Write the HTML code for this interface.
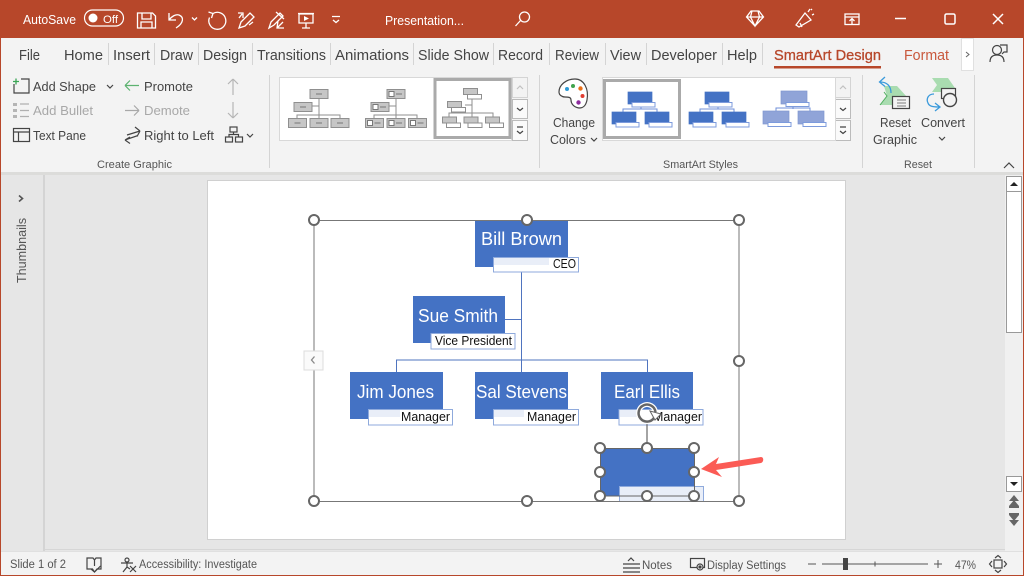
<!DOCTYPE html>
<html><head><meta charset="utf-8"><style>
html,body{margin:0;padding:0;background:#e6e6e6;width:1024px;height:576px;overflow:hidden}
svg{display:block;position:absolute;left:0;top:0;filter:blur(.3px)}
text{font-family:"Liberation Sans",sans-serif;white-space:pre}
.tab{font-size:14.5px;fill:#444}
.r{font-size:13px;fill:#444}
.d{font-size:13px;fill:#a8a8a8}
.g{font-size:11px;fill:#555}
.s{font-size:11.5px;fill:#555}
.n{font-size:18px;fill:#fff}
.m{font-size:12.5px;fill:#111}
.w{fill:none;stroke:#fff;stroke-width:1.3}
.i{fill:none;stroke:#444;stroke-width:1.2}
.h{fill:#fff;stroke:#666;stroke-width:2}
.sep{stroke:#d4d4d4;stroke-width:1}
</style></head><body>
<svg width="1024" height="576" viewBox="0 0 1024 576" xmlns="http://www.w3.org/2000/svg">
<defs>
<g id="lg"><rect width="18" height="9" fill="#c6c6c6" stroke="#8f8f8f"/><path d="M6 4.5h6" stroke="#777"/></g>
<g id="lg2"><rect width="18" height="9" fill="#c6c6c6" stroke="#8f8f8f"/><rect x="2" y="2" width="5" height="5" fill="#fff" stroke="#777"/><path d="M9 4.5h6" stroke="#777"/></g>
<g id="lg3"><rect width="14" height="6" fill="#c6c6c6" stroke="#8f8f8f"/><rect x="4" y="6" width="14" height="4.5" fill="#fff" stroke="#8f8f8f"/></g>
<g id="st"><rect width="24" height="12" fill="#4472c4" stroke="#4472c4" stroke-width=".7"/><rect x="4" y="10.5" width="23" height="4.5" fill="#fff" stroke="#7d9bdc"/></g>
<g id="st2"><rect width="26" height="13" fill="#90a4d8" stroke="#7f96d0" stroke-width=".7"/><rect x="5" y="11.5" width="23" height="4" fill="#fff" stroke="#7d9bdc"/></g>
</defs>

<!-- window -->
<rect width="1024" height="576" fill="#b7472a"/>
<rect x="1" y="38" width="1022" height="537" fill="#e6e6e6"/>
<rect x="1" y="38" width="1022" height="134" fill="#f3f3f3"/>
<rect x="1" y="172" width="1022" height="3" fill="#dcdcda"/>

<!-- title bar -->
<text x="23" y="24" font-size="13" fill="#fff" textLength="53" lengthAdjust="spacingAndGlyphs">AutoSave</text>
<rect x="84.500" y="10" width="39" height="16" rx="8" fill="none" stroke="#fff" stroke-width="1.200"/>
<circle cx="93" cy="18" r="4.500" fill="#fff"/>
<text x="103" y="23" font-size="11" fill="#fff" textLength="15" lengthAdjust="spacingAndGlyphs">Off</text>
<g class="w">
<path d="M137.500 13h15l3 3v12h-18z"/><path d="M142 13v6h9v-6M141 28v-6h11v6"/>
<path d="M169 13v7h7M169 20c3-4 7-6 10-5 5 2 5 8-3 13"/>
<path d="M192 17.500l2.500 2.500 2.500-2.500"/>
<path d="M213 13.500A8.500 8.500 0 1 1 209.500 17.500"/><path d="M208.500 12l4.500 1.500-1.500 4.500"/>
<path d="M239 28l2-6 9-9 4 4-9 9zM239 18l3-4M238 13h5v5M249 25l4-3"/>
<path d="M269 28l2-6 9-9 3 3-9 9zM276 12l8 7M278 21l-1 7h7M277 28l6-6"/>
<path d="M299 14h14v9h-14zM306 23v5M302 28h8M298 13.500h16"/>
<path d="M332 16.500h8M333 20l3 2.500 3-2.500"/>
</g>
<path d="M304 16l5 2.500-5 2.500z" fill="#fff"/>
<text x="385" y="25" font-size="12.5" fill="#fff" textLength="79" lengthAdjust="spacingAndGlyphs">Presentation...</text>
<g class="w">
<circle cx="524.500" cy="17" r="5"/><path d="M520.500 20.500l-5 5.500"/>
<path d="M746.500 17l4.500-6h8l4.500 6-8.500 9zM746.500 17h17M752 11l-1.500 6 4.500 9 4.500-9-1.500-6"/>
<path d="M796 25l9-12 6 7-12 7zM800 23l2 4M808 12l2-3M812 15l2-1M811 10l1-1"/>
<rect x="845" y="14" width="14" height="10.500"/><path d="M845 17h14M852 24v-5M849.500 21l2.500-2.500 2.500 2.500"/>
<path d="M895 18.500h11" stroke-width="1.500"/>
<rect x="945" y="14" width="10" height="10" rx="1.500" stroke-width="1.500"/>
<path d="M993 14l10 10M1003 14l-10 10" stroke-width="1.500"/>
</g>

<!-- tabs -->
<text class="tab" x="19" y="60" textLength="21" lengthAdjust="spacingAndGlyphs">File</text>
<text class="tab" x="64" y="60" textLength="39" lengthAdjust="spacingAndGlyphs">Home</text>
<text class="tab" x="113" y="60" textLength="37" lengthAdjust="spacingAndGlyphs">Insert</text>
<text class="tab" x="160" y="60" textLength="33" lengthAdjust="spacingAndGlyphs">Draw</text>
<text class="tab" x="203" y="60" textLength="44" lengthAdjust="spacingAndGlyphs">Design</text>
<text class="tab" x="257" y="60" textLength="69" lengthAdjust="spacingAndGlyphs">Transitions</text>
<text class="tab" x="335" y="60" textLength="74" lengthAdjust="spacingAndGlyphs">Animations</text>
<text class="tab" x="418" y="60" textLength="71" lengthAdjust="spacingAndGlyphs">Slide Show</text>
<text class="tab" x="498" y="60" textLength="45" lengthAdjust="spacingAndGlyphs">Record</text>
<text class="tab" x="555" y="60" textLength="44" lengthAdjust="spacingAndGlyphs">Review</text>
<text class="tab" x="610" y="60" textLength="31" lengthAdjust="spacingAndGlyphs">View</text>
<text class="tab" x="651" y="60" textLength="66" lengthAdjust="spacingAndGlyphs">Developer</text>
<text class="tab" x="727" y="60" textLength="30" lengthAdjust="spacingAndGlyphs">Help</text>
<text class="tab" x="774" y="60" style="fill:#b7472a" stroke="#b7472a" stroke-width=".3" textLength="107" lengthAdjust="spacingAndGlyphs">SmartArt Design</text>
<text class="tab" x="904" y="60" style="fill:#c9583c" textLength="45" lengthAdjust="spacingAndGlyphs">Format</text>
<rect x="774" y="66" width="107" height="2.500" fill="#b7472a"/>
<path class="sep" d="M108.500 43v22M154.500 43v22M198.500 43v22M252.500 43v22M330.500 43v22M413.500 43v22M493.500 43v22M549.500 43v22M605.500 43v22M646.500 43v22M722.500 43v22M762.500 43v22"/>
<rect x="961.500" y="38.500" width="12" height="32" fill="#fff" stroke="#e0e0e0"/>
<path d="M966 52l3 2.500-3 2.500" fill="none" stroke="#666"/>
<g class="i"><circle cx="997" cy="50" r="4.500"/><path d="M990 62c0-5 3-7 7-7s7 2 7 7M1000 45h7v7h-3l-2 2"/></g>

<!-- create graphic -->
<g class="i">
<path d="M21 79h8v14h-15v-9"/>
<path d="M107 85l3 3 3-3"/>
<path d="M20 104h9M20 110.500h9M20 116.500h9" stroke="#b0b0b0"/>
<rect x="13.500" y="128.500" width="16" height="13"/><path d="M13.500 132h16M18.500 132v9.500"/>
<path d="M127 135l13-4M140 131l-5-4M140 131l-3 5.500M138 135.500l-13 4.500M125 140l5-3M125 140l5 3.500"/>
<rect x="230" y="127" width="7" height="5"/><rect x="225.500" y="137" width="7" height="5"/><rect x="235.500" y="137" width="7" height="5"/><path d="M233.500 132v2.500M229 137v-2.500h9.500v2.500"/>
<path d="M247 134l3 3 3-3"/>
</g>
<rect x="13" y="103" width="4" height="3" fill="#b5b5b5"/><rect x="13" y="109" width="4" height="3" fill="#b5b5b5"/><rect x="13" y="115" width="4" height="3" fill="#b5b5b5"/>
<path d="M16 78.500v6M13 81.500h6" stroke="#3aa655" stroke-width="1.300"/>
<path d="M139 85.500h-14M125 85.500l5-5M125 85.500l5 5" fill="none" stroke="#5cb270" stroke-width="1.200"/>
<path d="M125 110.500h14M139 110.500l-5-5M139 110.500l-5 5" fill="none" stroke="#a8a8a8" stroke-width="1.200"/>
<path d="M233 95v-16M233 79l-5 5M233 79l5 5M233 102v16M233 118l-5-5M233 118l5-5" fill="none" stroke="#b5b5b5" stroke-width="1.200"/>
<text class="r" x="33" y="91" textLength="63" lengthAdjust="spacingAndGlyphs">Add Shape</text>
<text class="d" x="33" y="115" textLength="60" lengthAdjust="spacingAndGlyphs">Add Bullet</text>
<text class="r" x="33" y="140" textLength="53" lengthAdjust="spacingAndGlyphs">Text Pane</text>
<text class="r" x="144" y="91" textLength="49" lengthAdjust="spacingAndGlyphs">Promote</text>
<text class="d" x="144" y="115" textLength="46" lengthAdjust="spacingAndGlyphs">Demote</text>
<text class="r" x="144" y="140" textLength="70" lengthAdjust="spacingAndGlyphs">Right to Left</text>
<text class="g" x="97" y="168" textLength="75" lengthAdjust="spacingAndGlyphs">Create Graphic</text>
<path class="sep" d="M269.500 75v93M539.500 75v93M862.500 75v93M974.500 75v93"/>

<!-- layouts gallery -->
<rect x="279.500" y="77.500" width="232" height="63" fill="#fff" stroke="#d8d8d8"/>
<rect x="435" y="79.500" width="75" height="58" fill="#fff" stroke="#aaa" stroke-width="3"/>
<g fill="none" stroke="#8f8f8f">
<path d="M319 98v20M312 106h7M297 122v-7h43v7"/>
<path d="M396 98v20M389 106h7M374 122v-7h43v7"/>
<path d="M472 95v22M465 105h7M449 117v-4h44v4"/>
</g>
<use href="#lg" x="310" y="89.500"/><use href="#lg" x="294" y="102.500"/><use href="#lg" x="288.500" y="118.500"/><use href="#lg" x="310" y="118.500"/><use href="#lg" x="331" y="118.500"/>
<use href="#lg2" x="387" y="89.500"/><use href="#lg2" x="371" y="102.500"/><use href="#lg2" x="365.500" y="118.500"/><use href="#lg2" x="387" y="118.500"/><use href="#lg2" x="408.500" y="118.500"/>
<use href="#lg3" x="463.500" y="88.500"/><use href="#lg3" x="447.500" y="101.500"/><use href="#lg3" x="442.500" y="117"/><use href="#lg3" x="464" y="117"/><use href="#lg3" x="485.500" y="117"/>
<g fill="#f3f3f3" stroke="#d4d4d4">
<rect x="512.500" y="77.500" width="15" height="20"/><rect x="512.500" y="99.500" width="15" height="19" fill="#fafafa" stroke="#bbb"/><rect x="512.500" y="120.500" width="15" height="20" fill="#fafafa" stroke="#bbb"/>
<rect x="835.500" y="77.500" width="15" height="20"/><rect x="835.500" y="99.500" width="15" height="19" fill="#fafafa" stroke="#bbb"/><rect x="835.500" y="120.500" width="15" height="20" fill="#fafafa" stroke="#bbb"/>
</g>
<g fill="none" stroke="#444" stroke-width="1.200">
<path d="M517 108l3 2.500 3-2.500M517 127h6M517 131l3 2.500 3-2.500M840 108l3 2.500 3-2.500M840 127h6M840 131l3 2.500 3-2.500"/>
<path d="M517 89l3-3 3 3M840 89l3-3 3 3" stroke="#c0c0c0"/>
</g>

<!-- change colors -->
<path d="M575 79c-9 0-16 6-16 13 0 3 3 5 6 5 3 0 6 0 6 3 0 3 2 7 8 8 5 0 7-3 8-8 2-11-3-21-12-21z" fill="#fff" stroke="#444" stroke-width="1.200"/>
<circle cx="567" cy="89" r="2" fill="#2e9bd6"/><circle cx="573" cy="86" r="2" fill="#3fa34d"/><circle cx="580.500" cy="88.500" r="2.200" fill="#e8701a"/><circle cx="582.500" cy="96" r="2" fill="#e03c31"/><circle cx="578.500" cy="102.500" r="2.200" fill="#8e2c9e"/>
<text class="r" x="553" y="127" textLength="42" lengthAdjust="spacingAndGlyphs">Change</text>
<text class="r" x="550" y="144" textLength="36" lengthAdjust="spacingAndGlyphs">Colors</text>
<path class="i" d="M591 138l3 3 3-3"/>

<!-- styles gallery -->
<rect x="602.500" y="77.500" width="233" height="63" fill="#fff" stroke="#d8d8d8"/>
<rect x="604.500" y="80.500" width="75" height="57" fill="#fff" stroke="#aaa" stroke-width="3"/>
<g fill="none" stroke="#6f8fd8">
<path d="M641 106v3M623 112v-3h34v3"/>
<path d="M718 106v3M700 112v-3h34v3"/>
<path d="M793 106v3M776 111v-3h34v3"/>
</g>
<use href="#st" x="628" y="92"/><use href="#st" x="612" y="112"/><use href="#st" x="645" y="112"/>
<use href="#st" x="705" y="92"/><use href="#st" x="689" y="112"/><use href="#st" x="722" y="112"/>
<use href="#st2" x="781" y="91"/><use href="#st2" x="763" y="111"/><use href="#st2" x="798" y="111"/>
<text class="g" x="663" y="168" textLength="75" lengthAdjust="spacingAndGlyphs">SmartArt Styles</text>

<!-- reset / convert -->
<path d="M884 86h13l10 11h-12v8h-15l7-9z" fill="#a9dcb0"/>
<path d="M880 105l7-9-3-4" stroke="#4fae5e" fill="none"/>
<rect x="892.500" y="96.500" width="17" height="12" fill="#f3f3f3" stroke="#444" stroke-width="1.200"/>
<path d="M897 100h9M897 103h9M897 106h9" stroke="#555" stroke-width=".8"/>
<path d="M891 93c0-7-4-11-11-11M885 77l-5.500 5 5.500 4.500" fill="none" stroke="#3b9adb" stroke-width="1.300"/>
<path d="M932 78h16l7 10h-13v4h-10l5-7z" fill="#a9dcb0"/>
<rect x="941.500" y="88.500" width="14" height="10" fill="#f3f3f3" stroke="#444" stroke-width="1.200"/>
<circle cx="950" cy="100" r="6.500" fill="#f3f3f3" stroke="#444" stroke-width="1.400"/>
<path d="M934 94c-6 0-8 5-6 9 1 3 4 4 11 4M935 103l5 4-5 4" fill="none" stroke="#3b9adb" stroke-width="1.300"/>
<text class="r" x="880" y="127" textLength="31" lengthAdjust="spacingAndGlyphs">Reset</text>
<text class="r" x="873" y="144" textLength="44" lengthAdjust="spacingAndGlyphs">Graphic</text>
<text class="r" x="921" y="127" textLength="44" lengthAdjust="spacingAndGlyphs">Convert</text>
<path class="i" d="M939 137l3 3 3-3"/>
<text class="g" x="904" y="168" textLength="28" lengthAdjust="spacingAndGlyphs">Reset</text>
<path d="M1004 168l5-5 5 5" fill="none" stroke="#444" stroke-width="1.200"/>

<!-- side pane -->
<rect x="43" y="175" width="2" height="377" fill="#d4d4d4"/>
<path d="M19 195.500l3.500 3-3.500 3" fill="none" stroke="#555" stroke-width="1.600"/>
<text transform="translate(26 283) rotate(-90)" font-size="12.500" fill="#555" textLength="65" lengthAdjust="spacingAndGlyphs">Thumbnails</text>
<rect x="45" y="549" width="978" height="1" fill="#d6d6d6"/>

<!-- slide -->
<rect x="207.500" y="180.500" width="638" height="359" fill="#fff" stroke="#d0d0d0"/>

<!-- connectors -->
<g fill="none" stroke="#4f74bf" stroke-width="1">
<path d="M521.500 272v100M505 319.500h16M396.500 372v-12h251v12"/>
</g>

<!-- boxes -->
<g fill="#4472c4">
<rect x="475" y="220" width="93" height="47"/>
<rect x="413" y="296" width="92" height="47"/>
<rect x="350" y="372" width="93" height="47"/>
<rect x="475" y="372" width="93" height="47"/>
<rect x="601" y="372" width="92" height="47"/>
<rect x="600.500" y="448.500" width="94" height="47.500"/>
</g>
<g stroke="#8faadc" stroke-width="1">
<rect x="493.500" y="257.500" width="85" height="14.500" fill="#fff"/>
<rect x="431" y="333.500" width="84" height="15.500" fill="#fff"/>
<rect x="368.500" y="409.500" width="84" height="15.500" fill="#fff"/>
<rect x="493.500" y="409.500" width="85" height="15.500" fill="#fff"/>
<rect x="619" y="409.500" width="84" height="15.500" fill="#fff"/>
<rect x="619.500" y="486.500" width="84" height="15" fill="#e9eef8"/>
</g>
<g fill="#e9eef8">
<rect x="494" y="258" width="55" height="7"/><rect x="369" y="410" width="31" height="7"/><rect x="494" y="410" width="30" height="7"/><rect x="620" y="410" width="20" height="7"/>
</g>
<text class="n" x="481" y="245" textLength="81" lengthAdjust="spacingAndGlyphs">Bill Brown</text>
<text class="n" x="418" y="322" textLength="80" lengthAdjust="spacingAndGlyphs">Sue Smith</text>
<text class="n" x="357" y="398" textLength="77" lengthAdjust="spacingAndGlyphs">Jim Jones</text>
<text class="n" x="476" y="398" textLength="91" lengthAdjust="spacingAndGlyphs">Sal Stevens</text>
<text class="n" x="614" y="398" textLength="66" lengthAdjust="spacingAndGlyphs">Earl Ellis</text>
<text class="m" x="553" y="268" textLength="23" lengthAdjust="spacingAndGlyphs">CEO</text>
<text class="m" x="435" y="345" textLength="77" lengthAdjust="spacingAndGlyphs">Vice President</text>
<text class="m" x="401" y="421" textLength="49" lengthAdjust="spacingAndGlyphs">Manager</text>
<text class="m" x="527" y="421" textLength="49" lengthAdjust="spacingAndGlyphs">Manager</text>
<text class="m" x="653" y="421" textLength="49" lengthAdjust="spacingAndGlyphs">Manager</text>

<!-- frame and selection outlines -->
<rect x="314" y="220.500" width="425" height="281" fill="none" stroke="#777" stroke-width="1"/>
<rect x="600.500" y="448.500" width="94" height="47.500" fill="none" stroke="#666" stroke-width="1"/>

<!-- collapse button -->
<rect x="304" y="351" width="19" height="19" fill="#fafafa" stroke="#dcdcdc"/>
<path d="M314.500 356.500l-3 3.500 3 3.500" fill="none" stroke="#888" stroke-width="1.300"/>

<!-- rotate -->
<path d="M647 422v26" stroke="#666" stroke-width="1.200"/>
<path d="M654 418a8.500 8.500 0 1 1 1.500-6" fill="none" stroke="#fff" stroke-width="5"/>
<path d="M654 418a8.500 8.500 0 1 1 1.500-6" fill="none" stroke="#666" stroke-width="2.500"/>
<path d="M650 411l11 3-6 6z" fill="#fff" stroke="#666"/>

<!-- handles -->
<g class="h">
<circle cx="314" cy="220" r="5"/><circle cx="527" cy="220" r="5"/><circle cx="739" cy="220" r="5"/><circle cx="739" cy="361" r="5"/><circle cx="314" cy="501" r="5"/><circle cx="527" cy="501" r="5"/><circle cx="739" cy="501" r="5"/>
<circle cx="600" cy="448" r="5"/><circle cx="647" cy="448" r="5"/><circle cx="694" cy="448" r="5"/><circle cx="600" cy="472" r="5"/><circle cx="694" cy="472" r="5"/><circle cx="600" cy="496" r="5"/><circle cx="647" cy="496" r="5"/><circle cx="694" cy="496" r="5"/>
</g>

<!-- arrow -->
<path d="M701 469l18-12-3 7 45-7c3 0 3 5 0 6l-45 7 6 7z" fill="#fb5b55"/>

<!-- scrollbar -->
<rect x="1005" y="175" width="18" height="376" fill="#f0f0f0"/>
<rect x="1006.500" y="176.500" width="15" height="15" fill="#fff" stroke="#999"/>
<rect x="1006.500" y="191.500" width="15" height="141" fill="#fff" stroke="#999"/>
<rect x="1006.500" y="476.500" width="15" height="15" fill="#fff" stroke="#999"/>
<path d="M1010 186l4-4 4 4z" fill="#222"/>
<path d="M1010 482h8l-4 4z" fill="#222"/>
<path d="M1014 495l5 6h-10zM1014 500l5 6v2h-10v-2zM1014 526l-5-6h10zM1014 521l-5-6v-2h10v2z" fill="#666"/>

<!-- status bar -->
<rect x="1" y="551" width="1022" height="24" fill="#f3f3f3"/>
<rect x="1" y="551" width="1022" height="1" fill="#e0e0e0"/>
<text class="s" x="10" y="568" textLength="56" lengthAdjust="spacingAndGlyphs">Slide 1 of 2</text>
<g class="i" stroke-width="1"><path d="M87 558h6l1.500 2 1.500-2h5v11h-4l-2.500 3-2-3h-5.500zM94.500 560v6M91 569l3.500 3 6-6"/>
<circle cx="127" cy="560" r="2"/><path d="M121 563h12M127 563v4l-4 5M127 567l3 2M130 566l6 6M136 566l-6 6"/></g>
<text class="s" x="139" y="568" textLength="118" lengthAdjust="spacingAndGlyphs">Accessibility: Investigate</text>
<g class="i" stroke-width="1"><path d="M623 564h17M623 568h17M623 572h17M628 561l3-3 3 3"/>
<rect x="690.500" y="558.500" width="14" height="9"/><circle cx="700" cy="567" r="3" fill="#f3f3f3"/><circle cx="700" cy="567" r="1" fill="#444"/></g>
<text class="s" x="642" y="569" textLength="30" lengthAdjust="spacingAndGlyphs">Notes</text>
<text class="s" x="707" y="569" textLength="79" lengthAdjust="spacingAndGlyphs">Display Settings</text>
<path d="M808 564h8M822 564h106M875 561.500v5M934 564h8M938 560v8" stroke="#555" stroke-width="1" fill="none"/>
<rect x="843" y="558" width="5" height="12" fill="#444"/>
<text class="s" x="955" y="569" textLength="21" lengthAdjust="spacingAndGlyphs">47%</text>
<g class="i" stroke-width="1"><rect x="994" y="560" width="8" height="8"/><path d="M995 558l3-2.500 3 2.500M995 570l3 2.500 3-2.500M992 561l-2.500 3 2.500 3M1004 561l2.500 3-2.500 3"/></g>
</svg>
</body></html>
